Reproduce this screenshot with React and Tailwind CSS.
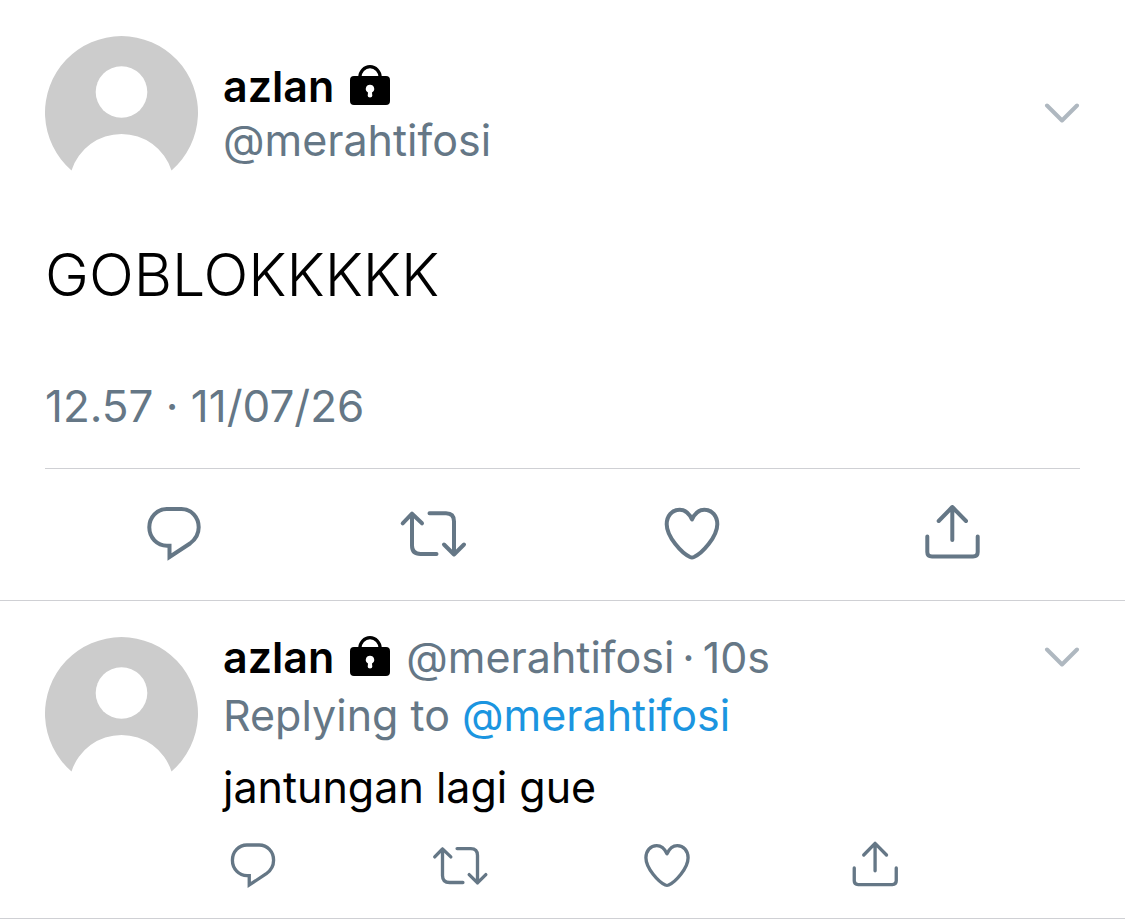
function Avatar() {
  return (
    <svg viewBox="0 0 153 153" className="size-[153px] shrink-0" role="img" aria-label="azlan's avatar">
      <path fill="#cccccc" d="M26.5 134.5A76.5 76.5 0 1 1 126.5 134.5A52.5 52.5 0 0 0 26.5 134.5Z" />
      <circle cx="76.5" cy="56" r="25.8" fill="#ffffff" />
    </svg>
  );
}

function Lock() {
  return (
    <svg viewBox="0 0 40 42" className="h-[42px] w-10 shrink-0" role="img" aria-label="Protected account">
      <path d="M9.8 13V12.5a10.2 10.8 0 0 1 20.4 0V13" fill="none" stroke="#000" strokeWidth="3.2" />
      <path
        fillRule="evenodd"
        d="M4 11H36a4 4 0 0 1 4 4V36a4 4 0 0 1-4 4H4a4 4 0 0 1-4-4V15a4 4 0 0 1 4-4ZM20 19.7a4.2 4.2 0 0 0-2 7.9l-.3 3.2a2.3 1.6 0 0 0 4.600 0l-.3-3.200a4.200 4.200 0 0 0-2-7.900Z"
      />
    </svg>
  );
}

const ICONS = {
  Reply:
    'M28.7 6H43.5C53.2 6 60.7 14 60.7 24.3C60.7 31 57.5 36.5 52 40.5L31.5 54V42.7H29C19 42.7 11.3 34.5 11.3 24.3C11.3 14 19 6 28.7 6Z',
  Retweet:
    'M5.7 20.3L15 10.7L25 20.3M15 10.7V42.5Q15 51 23.5 51H39.5M32.5 10.3H49Q57 10.3 57 18.5V51.5M47 41.5L57 51.5L67 41.5',
  Like:
    'M36 16.5C33.5 11 29 6.7 23.7 6.7C16 6.7 10.7 13 10.7 21.3C10.7 34 26 50.5 34 54Q36 54.8 38 54C46 50.5 61.3 34 61.3 21.3C61.3 13 56 6.7 48.3 6.7C43 6.7 38.5 11 36 16.5Z',
  Share:
    'M23.7 18L37.3 4L51 18M37.3 4V37M12.3 33.5V49Q12.3 53.5 17 53.5H58Q62.7 53.5 62.7 49V33.5',
};

function ActionButton({ label, small }) {
  return (
    <button type="button" aria-label={label} className="block text-[#657786]">
      <svg
        viewBox="0 0 72 60"
        className={small ? 'h-[50px] w-[60px]' : 'h-[60px] w-[72px]'}
        fill="none"
        stroke="currentColor"
        strokeWidth="4"
        strokeLinecap="round"
        strokeLinejoin={label === 'Reply' ? 'miter' : 'round'}
      >
        <path d={ICONS[label]} />
      </svg>
    </button>
  );
}

function MoreButton() {
  return (
    <button type="button" aria-label="More" className="block shrink-0 text-[#afb8c0]">
      <svg viewBox="0 0 36 20" className="h-5 w-9" fill="none" stroke="currentColor" strokeWidth="4" strokeLinecap="round" strokeLinejoin="round">
        <path d="M3 2.5L18 17.5L33 2.5" />
      </svg>
    </button>
  );
}

const LABELS = Object.keys(ICONS);

export default function App() {
  return (
    <main className="min-h-screen bg-white font-['Inter',sans-serif] text-[43px] leading-[54px] text-black">
      <article className="border-b border-[#cfd0d4] px-[45px] pt-9">
        <header className="flex gap-[25px]">
          <Avatar />
          <div className="min-w-0 flex-1 pt-[23px]">
            <div className="flex items-center gap-4">
              <span className="font-semibold">azlan</span>
              <Lock />
            </div>
            <div className="text-[#657786]">@merahtifosi</div>
          </div>
          <div className="pt-[67px]">
            <MoreButton />
          </div>
        </header>
        <p className="mt-[50px] text-[59px] leading-[72px] font-light">GOBLOKKKKK</p>
        <time className="mt-[68px] block text-[44px] text-[#657786]">12.57 · 11/07/26</time>
        <div className="mt-[35px] grid grid-cols-4 justify-items-center border-t border-[#cfd0d4] pt-[34px] pb-[37px]">
          {LABELS.map((l) => (
            <ActionButton key={l} label={l} />
          ))}
        </div>
      </article>

      <article className="flex gap-[25px] border-b border-[#cfd0d4] px-[45px] pt-[29px] pb-7">
        <div className="shrink-0 pt-[7px]">
          <Avatar />
        </div>
        <div className="min-w-0 flex-1">
          <div className="flex items-start justify-between">
            <div className="flex items-center whitespace-nowrap">
              <span className="mr-4 font-semibold">azlan</span>
              <Lock />
              <span className="ml-4 text-[#657786]">@merahtifosi</span>
              <span className="mx-2 text-[#657786]">·</span>
              <span className="text-[#657786]">10s</span>
            </div>
            <div className="pt-[17px]">
              <MoreButton />
            </div>
          </div>
          <div className="mt-1 text-[#657786]">
            Replying to <a href="#merahtifosi" className="text-[#1b95e0]">@merahtifosi</a>
          </div>
          <p className="mt-[18px]">jantungan lagi gue</p>
          <div className="mt-[26px] flex justify-between pr-44">
            {LABELS.map((l) => (
              <ActionButton key={l} label={l} small />
            ))}
          </div>
        </div>
      </article>
    </main>
  );
}
